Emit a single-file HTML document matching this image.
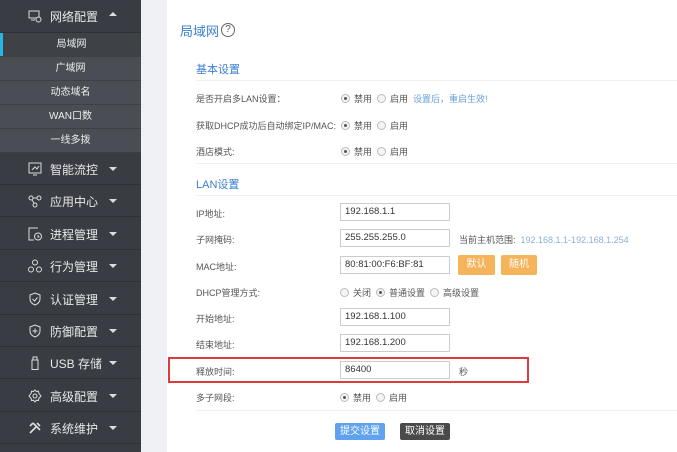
<!DOCTYPE html>
<html><head><meta charset="utf-8"><style>
*{margin:0;padding:0;box-sizing:border-box}
html,body{width:677px;height:452px;overflow:hidden}
body{background:#f0f1f4;font-family:"Liberation Sans","Noto Sans CJK SC",sans-serif;position:relative}
.sb{position:absolute;left:0;top:0;width:141px;height:452px;background:#393c42;overflow:hidden}
.hd{position:absolute;left:0;width:141px;height:32px;color:#e8e8e8;font-size:12px;border-bottom:1px solid #2e3035}
.hd .ic{position:absolute;left:28px;top:9px;width:14px;height:14px}
.hd .t{position:absolute;left:50px;top:8px}
.hd .ar{position:absolute;left:109px;top:14px;width:0;height:0;border-left:4px solid transparent;border-right:4px solid transparent;border-top:4px solid #ddd}
.hd .up{border-top:none;border-bottom:4px solid #ddd;top:12px}
.sub{position:absolute;left:0;width:141px;height:23.5px;background:#4a4d53;color:#eee;font-size:10px;text-align:center;line-height:23px;border-bottom:1px solid #3e4046}
.act{background:#3e4146;width:143px}
.act:before{content:"";position:absolute;left:0;top:0;width:3px;height:100%;background:#27b4e6}
.main{position:absolute;left:167px;top:0;width:510px;height:452px;background:#fff}
.ab{position:absolute;font-size:9px;color:#555;white-space:nowrap}
.blue{color:#3a7fd0}
.line{position:absolute;left:196px;width:481px;height:1px;background:#eef0f3}
.inp{position:absolute;left:340px;width:110px;height:18px;border:1px solid #ccc;font-size:9.5px;color:#333;padding-left:4px;line-height:16px}
.rd{display:inline-block;width:9px;height:9px;border-radius:50%;border:1px solid #bbb;background:#f4f4f4;vertical-align:-1px;margin-right:4px;position:relative}
.rd.on:after{content:"";position:absolute;left:2px;top:2px;width:3px;height:3px;border-radius:50%;background:#555}
.btn{position:absolute;color:#fff;font-size:10px;text-align:center;border-radius:2px}
</style></head><body>
<div class="sb">
 <div class="hd" style="top:0;height:33px"><svg class="ic" viewBox="0 0 14 14" fill="none" stroke="#ddd" stroke-width="1"><rect x="1" y="2" width="10" height="7"/><path d="M3 11h4"/><circle cx="10.5" cy="10.5" r="2.5" fill="#393c42"/></svg><span class="t">网络配置</span><span class="ar up"></span></div>
 <div class="sub act" style="top:33px">局域网</div>
 <div class="sub" style="top:57px">广域网</div>
 <div class="sub" style="top:81px">动态域名</div>
 <div class="sub" style="top:105px">WAN口数</div>
 <div class="sub" style="top:129px">一线多拨</div>
 <div class="hd" style="top:153px"><svg class="ic" viewBox="0 0 14 14" fill="none" stroke="#ddd"><rect x="1" y="1" width="12" height="10"/><path d="M4 8l3-3 2 2 2-3M5 13h4"/></svg><span class="t">智能流控</span><span class="ar"></span></div>
 <div class="hd" style="top:185px"><svg class="ic" viewBox="0 0 14 14" fill="none" stroke="#ddd"><circle cx="3" cy="4" r="2"/><circle cx="11" cy="4" r="2"/><circle cx="7" cy="11" r="2"/><path d="M5 4h4M4 6l2 3"/></svg><span class="t">应用中心</span><span class="ar"></span></div>
 <div class="hd" style="top:218px"><svg class="ic" viewBox="0 0 14 14" fill="none" stroke="#ddd"><path d="M10 1H1v12h5"/><circle cx="10" cy="9.5" r="3.5"/><path d="M10 8v2h1.5"/></svg><span class="t">进程管理</span><span class="ar"></span></div>
 <div class="hd" style="top:250px"><svg class="ic" viewBox="0 0 14 14" fill="none" stroke="#ddd"><circle cx="7" cy="3.5" r="2.5"/><circle cx="3" cy="10.5" r="2.5"/><circle cx="11" cy="10.5" r="2.5"/></svg><span class="t">行为管理</span><span class="ar"></span></div>
 <div class="hd" style="top:283px"><svg class="ic" viewBox="0 0 14 14" fill="none" stroke="#ddd"><path d="M7 1l5 2v4c0 3-2.5 5-5 6-2.5-1-5-3-5-6V3z"/><path d="M4.5 7l2 2 3-3.5"/></svg><span class="t">认证管理</span><span class="ar"></span></div>
 <div class="hd" style="top:315px"><svg class="ic" viewBox="0 0 14 14" fill="none" stroke="#ddd"><path d="M7 1l5 2v4c0 3-2.5 5-5 6-2.5-1-5-3-5-6V3z"/><path d="M7 4.5v5M4.5 7h5"/></svg><span class="t">防御配置</span><span class="ar"></span></div>
 <div class="hd" style="top:347px"><svg class="ic" viewBox="0 0 14 14" fill="none" stroke="#ddd"><rect x="4" y="4" width="6" height="9.5"/><path d="M5 4V1h4v3"/></svg><span class="t">USB 存储</span><span class="ar"></span></div>
 <div class="hd" style="top:380px"><svg class="ic" viewBox="0 0 14 14" fill="none" stroke="#ddd"><circle cx="7" cy="7" r="2"/><path d="M7 1l1.5 1.5 2-.3.3 2L13 7l-2.2 2.5-.3 2-2-.3L7 13l-1.5-1.8-2 .3-.3-2L1 7l2.2-2.8.3-2 2 .3z"/></svg><span class="t">高级配置</span><span class="ar"></span></div>
 <div class="hd" style="top:412px"><svg class="ic" viewBox="0 0 14 14" fill="none" stroke="#ddd" stroke-width="1.6"><path d="M2 12l7-7M5 2l7 7M9 2l3 3M2 5l3-3"/></svg><span class="t">系统维护</span><span class="ar"></span></div>
</div>
<div class="main"></div>
<div class="ab blue" style="left:180px;top:21px;font-size:13px">局域网</div>
<div style="position:absolute;left:221px;top:23px;width:14px;height:14px;border:1px solid #666;border-radius:50%;font-size:10px;text-align:center;line-height:12px;color:#555">?</div>
<div class="ab blue" style="left:196px;top:61px;font-size:11px">基本设置</div>
<div class="line" style="top:80px"></div>
<div class="ab" style="left:196px;top:92px">是否开启多LAN设置：</div>
<div class="ab" style="left:341px;top:92px"><span class="rd on"></span>禁用 &nbsp;<span class="rd"></span>启用 &nbsp;<span style="color:#6a9fd8">设置后，重启生效!</span></div>
<div class="ab" style="left:196px;top:119px">获取DHCP成功后自动绑定IP/MAC:</div>
<div class="ab" style="left:341px;top:119px"><span class="rd on"></span>禁用 &nbsp;<span class="rd"></span>启用</div>
<div class="ab" style="left:196px;top:145px">酒店模式:</div>
<div class="ab" style="left:341px;top:145px"><span class="rd on"></span>禁用 &nbsp;<span class="rd"></span>启用</div>
<div class="line" style="top:163px"></div>
<div class="ab blue" style="left:196px;top:176px;font-size:11px">LAN设置</div>
<div class="line" style="top:195px"></div>
<div class="ab" style="left:196px;top:207px">IP地址:</div>
<div class="inp" style="top:203px">192.168.1.1</div>
<div class="ab" style="left:196px;top:233px">子网掩码:</div>
<div class="inp" style="top:229px">255.255.255.0</div>
<div class="ab" style="left:459px;top:233px">当前主机范围: <span style="color:#8ab0dc">&nbsp;192.168.1.1-192.168.1.254</span></div>
<div class="ab" style="left:196px;top:260px">MAC地址:</div>
<div class="inp" style="top:256px">80:81:00:F6:BF:81</div>
<div class="btn" style="left:458px;top:255px;width:37px;height:20px;line-height:20px;background:#f5b35a">默认</div>
<div class="btn" style="left:501px;top:255px;width:36px;height:20px;line-height:20px;background:#f5b35a">随机</div>
<div class="ab" style="left:196px;top:286px">DHCP管理方式:</div>
<div class="ab" style="left:340px;top:286px"><span class="rd"></span>关闭 &nbsp;<span class="rd on"></span>普通设置 &nbsp;<span class="rd"></span>高级设置</div>
<div class="ab" style="left:196px;top:312px">开始地址:</div>
<div class="inp" style="top:308px">192.168.1.100</div>
<div class="ab" style="left:196px;top:338px">结束地址:</div>
<div class="inp" style="top:334px">192.168.1.200</div>
<div style="position:absolute;left:168px;top:357px;width:361px;height:26px;border:2px solid #e0393e"></div>
<div class="ab" style="left:196px;top:365px">释放时间:</div>
<div class="inp" style="top:361px">86400</div>
<div class="ab" style="left:459px;top:365px">秒</div>
<div class="ab" style="left:340px;top:391px"><span class="rd on"></span>禁用 &nbsp;<span class="rd"></span>启用</div>
<div class="ab" style="left:196px;top:391px">多子网段:</div>
<div class="line" style="top:410px"></div>
<div class="btn" style="left:335px;top:423px;width:50px;height:17px;line-height:17px;background:#5fa2ee">提交设置</div>
<div class="btn" style="left:400px;top:423px;width:50px;height:17px;line-height:17px;background:#4a4a4a">取消设置</div>
</body></html>
